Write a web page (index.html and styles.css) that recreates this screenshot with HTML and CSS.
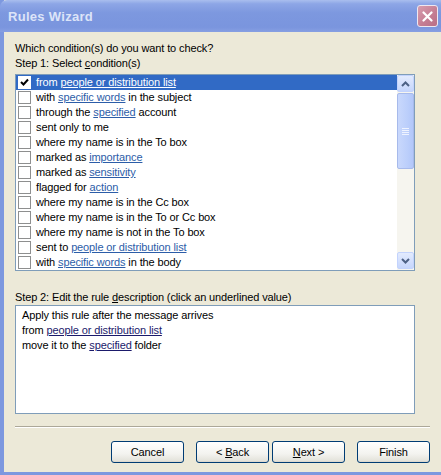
FILE: index.html
```html
<!DOCTYPE html>
<html>
<head>
    <title>Rules Wizard</title>
    <link rel="stylesheet" href="styles.css">
</head>
<body>
    <div class="window">
        <div class="titlebar">
            <span class="title">Rules Wizard</span>
            <span class="close">
                <svg width="11" height="11" viewBox="0 0 11 11">
                    <path d="M1.5 1.5 L9.5 9.5 M9.5 1.5 L1.5 9.5" stroke="#fff" stroke-width="2.2" stroke-linecap="round"/>
                </svg>
            </span>
        </div>

        <div class="content">
            <div class="label">Which condition(s) do you want to check?</div>
            <div class="label">Step 1: Select <u>c</u>ondition(s)</div>

            <div class="listbox">
                <div class="rows">
                    <div class="row selected"><span class="check checked">
                        <svg width="11" height="11" viewBox="0 0 11 11"><path d="M2 5 L4.5 7.5 L9 2.5" stroke="#000" stroke-width="2" fill="none"/></svg>
                    </span>from <a>people or distribution list</a></div>
                    <div class="row"><span class="check"></span>with <a>specific words</a> in the subject</div>
                    <div class="row"><span class="check"></span>through the <a>specified</a> account</div>
                    <div class="row"><span class="check"></span>sent only to me</div>
                    <div class="row"><span class="check"></span>where my name is in the To box</div>
                    <div class="row"><span class="check"></span>marked as <a>importance</a></div>
                    <div class="row"><span class="check"></span>marked as <a>sensitivity</a></div>
                    <div class="row"><span class="check"></span>flagged for <a>action</a></div>
                    <div class="row"><span class="check"></span>where my name is in the Cc box</div>
                    <div class="row"><span class="check"></span>where my name is in the To or Cc box</div>
                    <div class="row"><span class="check"></span>where my name is not in the To box</div>
                    <div class="row"><span class="check"></span>sent to <a>people or distribution list</a></div>
                    <div class="row"><span class="check"></span>with <a>specific words</a> in the body</div>
                </div>
                <div class="scrollbar">
                    <div class="sb-btn">
                        <svg width="9" height="6" viewBox="0 0 9 6"><path d="M1 5 L4.5 1.5 L8 5" stroke="#4D6185" stroke-width="2" fill="none"/></svg>
                    </div>
                    <div class="sb-thumb">
                        <span class="grip"></span>
                    </div>
                    <div class="sb-track"></div>
                    <div class="sb-btn">
                        <svg width="9" height="6" viewBox="0 0 9 6"><path d="M1 1 L4.5 4.5 L8 1" stroke="#4D6185" stroke-width="2" fill="none"/></svg>
                    </div>
                </div>
            </div>

            <div class="label step2">Step 2: Edit the rule <u>d</u>escription (click an underlined value)</div>
            <div class="description">
                <div>Apply this rule after the message arrives</div>
                <div>from <a>people or distribution list</a></div>
                <div>move it to the <a>specified</a> folder</div>
            </div>

            <div class="separator"></div>

            <div class="buttons">
                <button class="btn">Cancel</button>
                <button class="btn gap-l">&lt; <u>B</u>ack</button>
                <button class="btn gap-s"><u>N</u>ext &gt;</button>
                <button class="btn gap-l">Finish</button>
            </div>
        </div>
    </div>
</body>
</html>
```

FILE: styles.css
```css
body {
    margin: 0;
    font-family: "Liberation Sans", Arial, sans-serif;
    font-size: 11px;
    letter-spacing: -0.12px;
    color: #000;
    overflow: hidden;
}

.window {
    width: 441px;
    height: 475px;
    box-sizing: border-box;
    background-color: #ECE9D8;
    border-left: 4px solid #7D98DF;
    border-bottom: 3px solid #7D98DF;
    display: flex;
    flex-direction: column;
}

.titlebar {
    height: 32px;
    margin-left: -4px;
    padding: 0 3px 0 8px;
    box-sizing: border-box;
    border-top-left-radius: 7px;
    background: linear-gradient(#A9BEEE, #8DA6E6 12%, #7D98DF 40%, #7A95DE 85%, #869FE2);
    display: flex;
    align-items: center;
    justify-content: space-between;
}

.title {
    color: #DCE4F8;
    font-weight: bold;
    font-size: 13px;
    font-family: "Liberation Sans", Arial, sans-serif;
    letter-spacing: 0.3px;
}

.close {
    width: 19px;
    height: 20px;
    border: 1px solid #EEE7F0;
    border-radius: 3px;
    background: linear-gradient(135deg, #D79DAE, #C47C92 60%, #B96E86);
    display: flex;
    align-items: center;
    justify-content: center;
}

.content {
    padding: 9px 11px 0 11px;
}

.label {
    line-height: 15px;
}

.listbox {
    margin-top: 3px;
    width: 400px;
    height: 197px;
    box-sizing: border-box;
    border: 1px solid #7F9DB9;
    background-color: #fff;
    display: flex;
}

.rows {
    flex: 1;
}

.row {
    height: 15px;
    line-height: 15px;
    display: flex;
    align-items: center;
    white-space: pre;
}

.row a {
    color: #2C5DA8;
    text-decoration: underline;
}

.row.selected {
    background-color: #316AC5;
    color: #fff;
}

.row.selected a {
    color: #fff;
}

.check {
    width: 11px;
    height: 11px;
    margin: 0 5px 0 2px;
    border: 1px solid #8E8F8F;
    background-color: #fff;
    display: flex;
    align-items: center;
    justify-content: center;
}

.check.checked {
    border-color: #fff;
}

.scrollbar {
    width: 17px;
    display: flex;
    flex-direction: column;
    background-color: #F6F5EF;
}

.sb-btn {
    height: 15px;
    margin: 0 0 1px 0;
    border: 1px solid #C3D3FD;
    border-radius: 2px;
    background: linear-gradient(#E3EBFE, #C6D6FC);
    display: flex;
    align-items: center;
    justify-content: center;
}

.sb-thumb {
    height: 74px;
    border: 1px solid #A7BAEB;
    border-radius: 2px;
    background: linear-gradient(90deg, #C9D8FC, #BCCFFB 60%, #B2C7FA);
    display: flex;
    align-items: center;
    justify-content: center;
}

.grip {
    width: 7px;
    height: 7px;
    background: repeating-linear-gradient(#EEF3FF 0, #EEF3FF 1px, transparent 1px, transparent 2px);
}

.sb-track {
    flex: 1;
}

.step2 {
    margin-top: 19px;
}

.description {
    width: 400px;
    height: 109px;
    box-sizing: border-box;
    border: 1px solid #7F9DB9;
    background-color: #fff;
    padding: 2px 6px;
    line-height: 15px;
}

.description a {
    color: #1B1A6B;
    text-decoration: underline;
}

.separator {
    margin-top: 12px;
    width: 415px;
    border-top: 1px solid #ACA899;
    border-bottom: 1px solid #fff;
}

.buttons {
    margin-top: 13px;
    width: 415px;
    display: flex;
    justify-content: flex-end;
}

.btn {
    width: 73px;
    height: 22px;
    padding: 0;
    font-family: "Liberation Sans", Arial, sans-serif;
    font-size: 11px;
    letter-spacing: -0.12px;
    color: #000;
    border: 1px solid #003C74;
    border-radius: 3px;
    background: linear-gradient(#FFFFFF, #F3F3EF 60%, #E3E2DA 95%, #D6D0C5);
}

.gap-l {
    margin-left: 12px;
}

.gap-s {
    margin-left: 3px;
}
```
